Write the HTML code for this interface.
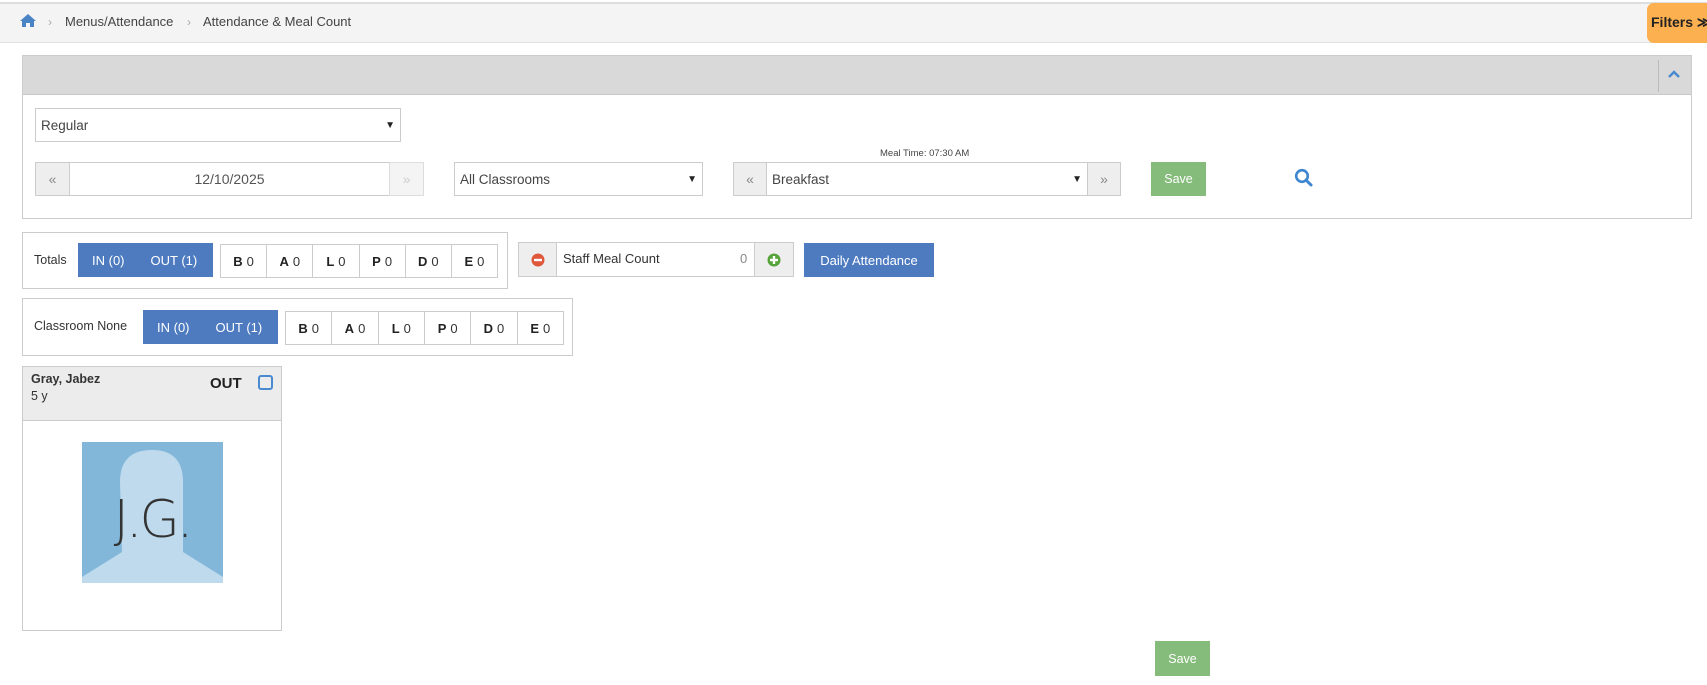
<!DOCTYPE html>
<html><head><meta charset="utf-8"><style>
*{box-sizing:border-box;margin:0;padding:0}
body{width:1707px;height:685px;background:#fff;font-family:"Liberation Sans",sans-serif;font-size:13px;color:#333;position:relative;overflow:hidden}
.a{position:absolute}
.hdr{left:0;top:2px;width:1707px;height:41px;background:#f4f4f4;border-top:2px solid #ddd;border-bottom:1px solid #e2e2e2}
.bc{top:14px;font-size:13px;color:#444}
.sep{color:#aaa;font-size:12px}
.filt{left:1647px;top:3px;width:62px;height:40px;background:#fdb04f;border-radius:7px 0 0 7px;font-weight:bold;font-size:14px;color:#222;padding:11px 0 0 4px;white-space:nowrap;overflow:hidden}
.box{border:1px solid #ccc;background:#fff}
.sel{border:1px solid #ccc;background:#fff;padding:0 5px;display:flex;align-items:center;justify-content:space-between;font-size:13.5px;color:#444}
.btn{background:#eee;border:1px solid #ccc;display:flex;align-items:center;justify-content:center;color:#888;font-size:14px}
.save{background:#86bc7b;color:#fff;display:flex;align-items:center;justify-content:center;font-size:12.5px}
.blue{background:#4e7bc0;color:#fff;display:flex;align-items:center;font-size:13px}
.let{display:flex;border:1px solid #ccc}
.let div{flex:1;border-right:1px solid #ccc;display:flex;align-items:center;justify-content:center;font-size:13px;color:#333}
.let div:last-child{border-right:none}
.let b{margin-right:4px;font-weight:bold;color:#222}
</style></head><body>
<div class="a hdr"></div>
<svg class="a" style="left:19px;top:13px" width="18" height="15" viewBox="0 0 18 15"><path d="M9 1 L1 8 L3 8 L3 14 L7 14 L7 10 L11 10 L11 14 L15 14 L15 8 L17 8 Z" fill="#4a84c4"/></svg>
<div class="a bc" style="left:48px"><span class="sep">›</span></div>
<div class="a bc" style="left:65px">Menus/Attendance</div>
<div class="a bc" style="left:187px"><span class="sep">›</span></div>
<div class="a bc" style="left:203px">Attendance &amp; Meal Count</div>
<div class="a filt">Filters ≫</div>

<div class="a box" style="left:22px;top:55px;width:1670px;height:164px"></div>
<div class="a" style="left:23px;top:56px;width:1668px;height:39px;background:#d9d9d9;border-bottom:1px solid #c8c8c8"></div>
<div class="a" style="left:1658px;top:60px;width:1px;height:32px;background:#bbb"></div>
<svg class="a" style="left:1668px;top:70px" width="12" height="8" viewBox="0 0 12 8"><path d="M1 7 L6 2 L11 7" stroke="#4a8ad0" stroke-width="2.5" fill="none"/></svg>

<div class="a sel" style="left:35px;top:108px;width:366px;height:34px">Regular<span style="font-size:10px;color:#222">▼</span></div>

<div class="a btn" style="left:35px;top:162px;width:35px;height:34px">«</div>
<div class="a box" style="left:69px;top:162px;width:321px;height:34px;text-align:center;line-height:32px;font-size:14px;color:#555">12/10/2025</div>
<div class="a btn" style="left:389px;top:162px;width:35px;height:34px;background:#f4f4f4;color:#ccc;border-color:#ddd">»</div>

<div class="a sel" style="left:454px;top:162px;width:249px;height:34px">All Classrooms<span style="font-size:10px;color:#222">▼</span></div>

<div class="a" style="left:880px;top:148px;font-size:9.5px;color:#444">Meal Time: 07:30 AM</div>
<div class="a btn" style="left:733px;top:162px;width:34px;height:34px">«</div>
<div class="a sel" style="left:766px;top:162px;width:322px;height:34px">Breakfast<span style="font-size:10px;color:#222">▼</span></div>
<div class="a btn" style="left:1087px;top:162px;width:34px;height:34px">»</div>
<div class="a save" style="left:1151px;top:162px;width:55px;height:34px">Save</div>
<svg class="a" style="left:1294px;top:168px" width="20" height="20" viewBox="0 0 20 20"><circle cx="8" cy="8" r="5.8" stroke="#3e86cf" stroke-width="2.6" fill="none"/><path d="M12 12 L17 17" stroke="#3e86cf" stroke-width="3" stroke-linecap="round"/></svg>

<div class="a box" style="left:22px;top:232px;width:486px;height:57px"></div>
<div class="a" style="left:34px;top:253px;font-size:12.5px">Totals</div>
<div class="a blue" style="left:78px;top:243px;width:135px;height:34px"><span style="margin-left:14px">IN (0)</span><span style="margin-left:26px">OUT (1)</span></div>
<div class="a let" style="left:220px;top:244px;width:278px;height:34px"><div><b>B</b>0</div><div><b>A</b>0</div><div><b>L</b>0</div><div><b>P</b>0</div><div><b>D</b>0</div><div><b>E</b>0</div></div>

<div class="a" style="left:518px;top:242px;width:276px;height:35px;border:1px solid #ccc;background:#fff"></div>
<div class="a btn" style="left:518px;top:242px;width:39px;height:35px"><svg width="14" height="14"><circle cx="7" cy="7" r="6.5" fill="#e0583c"/><rect x="3" y="5.8" width="8" height="2.4" fill="#fff"/></svg></div>
<div class="a" style="left:563px;top:251px;font-size:13px">Staff Meal Count</div>
<div class="a" style="left:740px;top:251px;font-size:13px;color:#888">0</div>
<div class="a btn" style="left:754px;top:242px;width:40px;height:35px"><svg width="14" height="14"><circle cx="7" cy="7" r="6.5" fill="#56a33b"/><rect x="3" y="5.8" width="8" height="2.4" fill="#fff"/><rect x="5.8" y="3" width="2.4" height="8" fill="#fff"/></svg></div>
<div class="a blue" style="left:804px;top:243px;width:130px;height:34px;justify-content:center">Daily Attendance</div>

<div class="a box" style="left:22px;top:298px;width:551px;height:58px"></div>
<div class="a" style="left:34px;top:319px;font-size:12.5px">Classroom None</div>
<div class="a blue" style="left:143px;top:310px;width:135px;height:34px"><span style="margin-left:14px">IN (0)</span><span style="margin-left:26px">OUT (1)</span></div>
<div class="a let" style="left:285px;top:311px;width:279px;height:34px"><div><b>B</b>0</div><div><b>A</b>0</div><div><b>L</b>0</div><div><b>P</b>0</div><div><b>D</b>0</div><div><b>E</b>0</div></div>

<div class="a box" style="left:22px;top:366px;width:260px;height:265px"></div>
<div class="a" style="left:23px;top:367px;width:258px;height:54px;background:#ececec;border-bottom:1px solid #ccc"></div>
<div class="a" style="left:31px;top:372px;font-size:12.5px;font-weight:bold;color:#333">Gray, Jabez</div>
<div class="a" style="left:31px;top:389px;font-size:12.5px">5 y</div>
<div class="a" style="left:210px;top:375px;font-size:15px;font-weight:bold;color:#222">OUT</div>
<div class="a" style="left:258px;top:375px;width:15px;height:15px;border:2px solid #4a8ad0;border-radius:3px"></div>
<svg class="a" style="left:82px;top:442px" width="141" height="141" viewBox="0 0 141 141"><rect width="141" height="141" fill="#82b7da"/><path d="M38 40 Q38 8 70 8 Q101 8 101 40 L101 110 L141 135 L141 141 L0 141 L0 135 L40 110 Z" fill="#bfdaed"/><text x="70" y="95" text-anchor="middle" font-family="DejaVu Sans" font-weight="200" font-size="52" letter-spacing="-3" fill="#333">J.G.</text></svg>

<div class="a save" style="left:1155px;top:641px;width:55px;height:35px">Save</div>
</body></html>
